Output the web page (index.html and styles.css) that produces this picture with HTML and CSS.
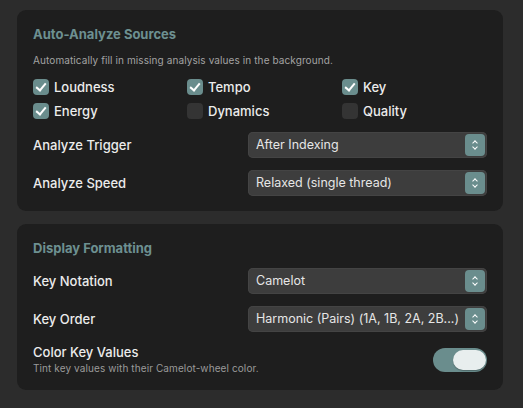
FILE: index.html
```html
<!DOCTYPE html>
<html lang="en">
<head>
    <meta charset="UTF-8">
    <meta name="viewport" content="width=device-width, initial-scale=1.0">
    <title>Analysis Settings</title>
    <link rel="stylesheet" href="styles.css">
</head>
<body>
    <!-- Auto-analyze card -->
    <div class="card">
        <h2 class="card-title">Auto-Analyze Sources</h2>
        <p class="desc">Automatically fill in missing analysis values in the background.</p>
        <div class="checks">
            <label class="check"><span class="box on"></span>Loudness</label>
            <label class="check"><span class="box on"></span>Tempo</label>
            <label class="check"><span class="box on"></span>Key</label>
            <label class="check"><span class="box on"></span>Energy</label>
            <label class="check"><span class="box"></span>Dynamics</label>
            <label class="check"><span class="box"></span>Quality</label>
        </div>
        <div class="row first">
            <span class="label">Analyze Trigger</span>
            <div class="select">After Indexing<span class="stepper"></span></div>
        </div>
        <div class="row">
            <span class="label">Analyze Speed</span>
            <div class="select">Relaxed (single thread)<span class="stepper"></span></div>
        </div>
    </div>

    <!-- Display formatting card -->
    <div class="card">
        <h2 class="card-title">Display Formatting</h2>
        <div class="row">
            <span class="label">Key Notation</span>
            <div class="select">Camelot<span class="stepper"></span></div>
        </div>
        <div class="row">
            <span class="label">Key Order</span>
            <div class="select">Harmonic (Pairs) (1A, 1B, 2A, 2B...)<span class="stepper"></span></div>
        </div>
        <div class="row">
            <div>
                <div class="label">Color Key Values</div>
                <div class="sub">Tint key values with their Camelot-wheel color.</div>
            </div>
            <span class="toggle"><span class="knob"></span></span>
        </div>
    </div>
</body>
</html>
```

FILE: styles.css
```css
/* Base */
body { margin: 0; padding: 10px 20px 0 17px; background: #2c2c2c; font-family: Inter, "Noto Sans", sans-serif; color: #ececec; }
.card { width: 454px; background: #1e1e1e; border-radius: 9px; padding: 16px 16px 15px; margin-bottom: 13px; }
.card-title { margin: 0; font-size: 13px; line-height: 16px; font-weight: 700; color: #6d9091; }
.desc { margin: 12px 0 0; font-size: 10px; line-height: 12px; letter-spacing: 0.1px; color: #a3a3a3; }

/* Checkboxes */
.checks { display: grid; grid-template-columns: 154px 155px 145px; margin-top: 9px; }
.check { display: flex; align-items: center; gap: 5px; height: 24px; font-size: 13px; font-weight: 500; }
.box { width: 16px; height: 16px; border-radius: 4px; background: #343434; position: relative; }
.box.on { background: #6a8d8d; }
.box.on::after { content: ""; position: absolute; left: 5px; top: 2px; width: 4px; height: 8px; border: solid #fff; border-width: 0 2.2px 2.2px 0; transform: rotate(40deg); }

/* Rows */
.row { display: flex; justify-content: space-between; align-items: center; margin-top: 12px; }
.row.first { margin-top: 9px; }
.label { font-size: 13px; line-height: 16px; font-weight: 500; }
.sub { font-size: 10px; line-height: 14px; margin-top: 1px; letter-spacing: 0.1px; color: #9a9a9a; }

/* Popup select */
.select { position: relative; width: 231px; height: 26px; padding-left: 8px; border-radius: 5px; background: #3d3d3d; box-shadow: inset 0 0 0 1px #444; font-size: 12.5px; line-height: 26px; color: #e6e6e6; }
.stepper { position: absolute; right: 2px; top: 2px; width: 20px; height: 22px; border-radius: 4px; background: #6a8d8d; }
.stepper::before, .stepper::after { content: ""; position: absolute; left: 8px; width: 3px; height: 3px; border: solid #fff; border-width: 1.3px 1.3px 0 0; }
.stepper::before { top: 6.5px; transform: rotate(-45deg); }
.stepper::after { top: 11px; transform: rotate(135deg); }

/* Toggle */
.toggle { position: relative; width: 54px; height: 24px; border-radius: 12px; background: #6a8d8d; }
.knob { position: absolute; right: 1px; top: 2px; width: 33px; height: 20px; border-radius: 10px; background: #e8eeee; box-shadow: 0 1px 1px rgba(0,0,0,0.25); }
```
